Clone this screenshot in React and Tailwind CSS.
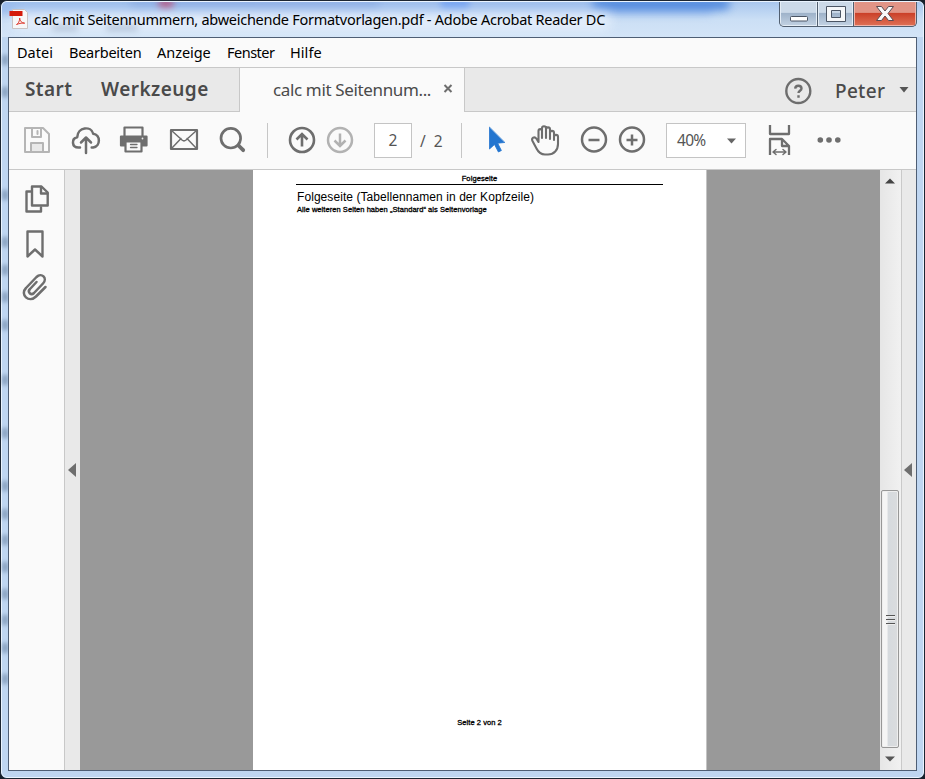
import React from "react";

function Icon({ box, className = "", stroke = "#6e6e6e", w = 2.4, children }) {
  const [, , width, height] = box.split(" ");
  return (
    <svg
      viewBox={box}
      width={width}
      height={height}
      className={"block shrink-0 " + className}
      fill="none"
      stroke={stroke}
      strokeWidth={w}
      strokeLinejoin="round"
      strokeLinecap="round"
    >
      {children}
    </svg>
  );
}

const menus = [
  ["Datei", "w-[52px] tracking-[0px]"],
  ["Bearbeiten", "w-[88px] tracking-[-0.25px]"],
  ["Anzeige", "w-[70px] tracking-[-0.05px]"],
  ["Fenster", "w-[63px] tracking-[-0.5px]"],
  ["Hilfe", "w-[50px] tracking-[0.05px]"],
];

function TitleBar() {
  return (
    <header className="relative flex h-[35px] shrink-0 items-start overflow-hidden rounded-t-[5px] bg-gradient-to-b from-[#a9c7ee] via-[#cbdff5] to-[#d3e4f7]">
      <div className="absolute -left-2 top-0 h-3 w-[720px] rounded-full bg-[#86adea] opacity-60 blur-[5px]" />
      <div className="absolute left-[128px] -top-1 h-3 w-[250px] rounded-full bg-[#7599da] opacity-40 blur-[4px]" />
      <div className="absolute left-[438px] -top-1 h-3 w-[30px] rounded-full bg-[#5b93f5] opacity-60 blur-[3px]" />
      <div className="absolute left-[590px] -top-1 h-3 w-[138px] rounded-full bg-[#3f7edb] opacity-80 blur-[4px]" />
      <div className="absolute left-[156px] -top-[3px] h-2.5 w-4 rounded-full bg-[#b54b77] opacity-80 blur-[3px]" />
      <div className="absolute left-[10px] top-[9px] h-[20px] w-[600px] rounded-full bg-[#eaf2fc] opacity-75 blur-[6px]" />
      <div className="absolute left-[50px] top-[23px] h-[6px] w-[26px] rounded-full bg-[#8193ad] opacity-40 blur-[3px]" />
      <div className="absolute left-[104px] top-[23px] h-[6px] w-[32px] rounded-full bg-[#8193ad] opacity-40 blur-[3px]" />
      <div className="relative ml-[7px] mt-[6px]">
        <svg viewBox="9 8 20 22" width="20" height="22" className="block">
          <path d="M12.500 9.500h12l3 3v16h-15z" fill="#f7f7f7" stroke="#c9c3c3" strokeWidth="1" />
          <path d="M9.500 11h13v5h-13z" fill="#d41b0b" />
          <path d="M16.500 24.500c2-1 3-3 3.200-6.500c0 3 2 5 5 5.200c-2-.4-5 0-8.200 1.300z" fill="none" stroke="#de3c30" strokeWidth="1" />
        </svg>
      </div>
      <h1 className="relative ml-[5px] mt-[7px] whitespace-nowrap text-[14.500px] leading-[20px] tracking-[-0.27px] text-black">
        calc mit Seitennummern, abweichende Formatvorlagen.pdf - Adobe Acrobat Reader DC
      </h1>
      <div className="relative ml-auto mr-[6px] flex h-[25px] w-[138px] shrink-0 overflow-hidden rounded-b-[5px] border border-t-0 border-[#515f70] bg-[#515f70]">
        <button className="flex w-[37px] justify-center border border-t-0 border-[#e4edf6] bg-gradient-to-b from-[#cbd9e8] from-45% via-[#9fb3ca] via-50% to-[#c0d0e1]">
          <svg width="20" height="22" className="block shrink-0">
            <rect x="1.500" y="14.500" width="17" height="4.500" rx="1" fill="#fff" stroke="#4b5564" />
          </svg>
        </button>
        <button className="ml-px flex w-[35px] justify-center border border-t-0 border-[#e4edf6] bg-gradient-to-b from-[#cbd9e8] from-45% via-[#9fb3ca] via-50% to-[#c0d0e1]">
          <svg width="22" height="22" className="block shrink-0">
            <path d="M1.500 4.500h19v15h-19zM6.500 8.500v7h9v-7z" fill="#f5f7f9" fillRule="evenodd" stroke="#4b5564" />
          </svg>
        </button>
        <button className="ml-px flex flex-1 justify-center border border-t-0 border-[#efb3a9] bg-gradient-to-b from-[#e19486] from-45% via-[#cb4029] via-50% to-[#dd6d52]">
          <svg width="22" height="22" className="block shrink-0">
            <path d="M2.500 4.500h5l3.500 4.500l3.500-4.500h5l-5.500 7l5.500 7h-5l-3.500-4.500l-3.500 4.500h-5l5.500-7z" fill="#f8f8f8" stroke="#5a4a50" strokeLinejoin="round" />
          </svg>
        </button>
      </div>
    </header>
  );
}

function Tabs() {
  return (
    <div className="flex h-[44px] shrink-0 text-[#4a4a4a]">
      <div className="flex w-[231px] border-b border-r border-[#c8c8c8] bg-[#e9e9e9] pt-[8px] text-[19px] font-semibold leading-[26px]">
        <span className="ml-[16px] w-[76px] tracking-[0.4px]">Start</span>
        <span className="tracking-[0.45px]">Werkzeuge</span>
      </div>
      <div className="flex w-[224px] bg-[#fafafa] pt-[9px]">
        <span className="ml-[33px] w-[170px] whitespace-nowrap text-[17px] leading-[25px] tracking-[-0.36px]">calc mit Seitennum...</span>
        <Icon box="443 84 11 12" className="mt-[6px]" w={2}>
          <path d="M444.500 86l7 7M451.500 86l-7 7" strokeLinecap="butt" />
        </Icon>
      </div>
      <div className="flex flex-1 border-b border-l border-[#c8c8c8] bg-[#e9e9e9]">
        <Icon box="784 77 28 28" className="ml-[319px] mt-[9px]" w={2.4}>
          <circle cx="798.300" cy="91" r="12" />
          <path d="M795.200 88.600c.2-4 6.300-3.600 6.300-.2c0 2.300-3 2.300-3 4.600" strokeLinecap="butt" />
          <path d="M798.500 95.200v2.500" strokeLinecap="butt" />
        </Icon>
        <span className="ml-[23px] mt-[10px] w-[64px] text-[19px] font-medium leading-[26px] tracking-[0.3px]">Peter</span>
        <svg viewBox="899 87 10 6" width="10" height="6" className="mt-[19px] block">
          <path d="M899.500 87h9l-4.500 5.500z" fill="#555" />
        </svg>
      </div>
    </div>
  );
}

function Toolbar() {
  return (
    <div className="flex h-[58px] shrink-0 items-start border-b border-[#c8c8c8] bg-[#fafafa] text-[15.500px] text-[#555]">
      <Icon box="23 125 28 30" className="ml-[14px] mt-[13px]" stroke="#b5b5b5" w={2}>
        <path d="M25 128h18l6 6v18h-24z" />
        <path d="M32 128v9h9v-9M37.500 131v3" />
        <path d="M31 152v-9h12v9z" fill="#e9e9e9" />
      </Icon>
      <Icon box="71 125 30 30" className="ml-[20px] mt-[13px]" w={2.5}>
        <path d="M80 147.500h-1.500c-7 0-7.300-9-1.300-10.300c.5-10.500 14-11.500 16-3.500c7.500 1 7.600 12.500 0 13.800h-1.500" />
        <path d="M86 153v-14.500M81 142.500l5-5l5 5" />
      </Icon>
      <Icon box="119 125 30 30" className="ml-[18px] mt-[13px]" w={2.2}>
        <path d="M124.500 136v-8.500h18v8.500" fill="#fafafa" />
        <path d="M121 136.500h25.500v9h-25.500z" fill="#6e6e6e" />
        <path d="M125.500 141.500h16v10h-16z" fill="#fafafa" />
        <path d="M130.500 144.500h6.500M130.500 147.500h6.500" strokeWidth="1.300" />
        <circle cx="142.500" cy="138.500" r=".9" fill="#eee" stroke="none" />
      </Icon>
      <Icon box="169 125 30 30" className="ml-[20px] mt-[13px]" w={2.2}>
        <path d="M171 130h26v19h-26z" />
        <path d="M171.500 130.500l10.500 9.500q2 1.700 4 0l10.500-9.500M171.500 148.500l9.500-10M196.500 148.500l-9.500-10" strokeWidth="1.500" />
      </Icon>
      <Icon box="218 125 30 31" className="ml-[19px] mt-[13px]" w={2.700}>
        <circle cx="230.800" cy="138.200" r="9.800" />
        <path d="M238.500 145.500l4.700 4.700" strokeWidth="3.800" />
      </Icon>
      <div className="ml-[19px] mt-[11px] h-[35px] w-px bg-[#c6c6c6]" />
      <Icon box="287 125 30 30" className="ml-[19px] mt-[13px]" w={2.600}>
        <circle cx="302" cy="140" r="12" />
        <path d="M302 146.500v-12M296.500 139.500l5.500-5.500l5.500 5.500" strokeLinejoin="miter" strokeLinecap="butt" />
      </Icon>
      <Icon box="325 125 30 30" className="ml-[8px] mt-[13px]" w={2.500} stroke="#b2b2b2">
        <circle cx="340" cy="140" r="12" />
        <path d="M340 133.500v12M334.500 140.500l5.500 5.500l5.500-5.500" strokeLinejoin="miter" strokeLinecap="butt" />
      </Icon>
      <div className="ml-[19px] mt-[11px] flex h-[35px] w-[38px] items-center justify-center border border-[#c4c4c4] bg-white">2</div>
      <span className="ml-[8px] mt-[17px] w-[42px] whitespace-pre leading-[24px]">/&nbsp; 2</span>
      <div className="-ml-px mt-[11px] h-[35px] w-px bg-[#c6c6c6]" />
      <Icon box="487 125 20 30" className="ml-[25px] mt-[13px]">
        <path d="M489.500 127.500v21.500l5-4.500l3.900 7.500l3-1.500l-3.700-7.300l6.800-.7z" fill="#2375cf" stroke="#2375cf" strokeWidth=".8" />
      </Icon>
      <Icon box="530 124 31 32" className="ml-[23px] mt-[12px]" w={2.100}>
        <path d="M538.500 142v-11c0-2.500 3.500-2.500 3.500 0v7v-9.500c0-3 4-3 4 0v9.500v-8.500c0-2.800 4-2.800 4 0v9.500v-6c0-2.800 4-2.800 4 0v7v-3c0-3 4-2.500 4-.3v7.300c0 6-4 10.500-10 10.500h-3c-5 0-7-3-8.500-6l-4-7.500c-1.500-3 2-5 3.800-2.500z" />
      </Icon>
      <Icon box="579 124 30 30" className="ml-[18px] mt-[12px]" w={2.500}>
        <circle cx="594" cy="139.500" r="12" />
        <path d="M588.500 140h11" strokeLinecap="butt" />
      </Icon>
      <Icon box="617 124 30 30" className="ml-[8px] mt-[12px]" w={2.500}>
        <circle cx="632" cy="139.500" r="12" />
        <path d="M626.500 140h11M632 134.500v11" strokeLinecap="butt" />
      </Icon>
      <div className="ml-[19px] mt-[11px] flex h-[35px] w-[80px] items-center border border-[#c4c4c4] bg-white pl-[10px]">
        <span className="w-[50px] tracking-[-0.7px]">40%</span>
        <svg width="9" height="6" className="block">
          <path d="M0 .5h9l-4.500 5z" fill="#666" />
        </svg>
      </div>
      <Icon box="768 124 24 32" className="ml-[22px] mt-[12px]" w={2.3}>
        <path d="M770 125v9h19v-9M770 155v-16h12l7 7v9M782 139.500v6.500h7" strokeLinecap="butt" strokeLinejoin="round" />
        <path d="M774 152h11M776 149.500l-3 2.500l3 2.500M783 149.500l3 2.500l-3 2.500" strokeWidth="1.500" />
      </Icon>
      <Icon box="815 135 28 10" className="ml-[23px] mt-[23px]">
        <g fill="#6e6e6e" stroke="none">
          <circle cx="820.300" cy="140" r="2.800" />
          <circle cx="829" cy="140" r="2.800" />
          <circle cx="837.800" cy="140" r="2.800" />
        </g>
      </Icon>
    </div>
  );
}

function Document() {
  return (
    <main className="flex min-w-0 flex-1 bg-[#999] pl-[173px]">
      <article className="flex w-[454px] flex-col border-r border-[#c4c4c4] bg-white pl-[43px] font-['Liberation_Sans',Arial,sans-serif] text-black">
        <div className="flex h-[15px] w-[367px] justify-center border-b border-black pt-[4px] text-[7.500px] leading-[9px]">
          <span className="tracking-[0.1px] [-webkit-text-stroke:0.3px_black]">Folgeseite</span>
        </div>
        <h2 className="ml-px mt-[5px] whitespace-nowrap text-[12px] leading-[14px] tracking-[0.07px]">Folgeseite (Tabellennamen in der Kopfzeile)</h2>
        <p className="ml-px mt-px whitespace-nowrap text-[7.500px] leading-[9px] tracking-[0.06px] [-webkit-text-stroke:0.3px_black]">
          Alle weiteren Seiten haben „Standard“ als Seitenvorlage
        </p>
        <footer className="mb-[43px] mt-auto w-[367px] text-center text-[7.500px] leading-[9px] tracking-[0.06px] [-webkit-text-stroke:0.3px_black]">Seite 2 von 2</footer>
      </article>
    </main>
  );
}

function Scrollbar() {
  return (
    <div className="flex w-[22px] flex-col items-center border-r border-[#c9c9c9] bg-gradient-to-r from-[#e6e6e6] to-[#f1f1f1] pr-px">
      <svg width="10" height="6" className="mt-[8px] block">
        <path d="M0 5.500l5-5l5 5z" fill="#444" />
      </svg>
      <div className="mt-auto flex h-[258px] w-[18px] flex-col items-center justify-center gap-[3px] rounded-[2px] border border-[#979797] bg-gradient-to-r from-[#f5f5f5] from-30% via-[#d6dade] via-40% to-[#dadcde] shadow-[inset_0_0_0_1px_#eee]">
        <i className="block h-px w-[9px] bg-[#555] shadow-[0_1px_0_#eee]" />
        <i className="block h-px w-[9px] bg-[#555] shadow-[0_1px_0_#eee]" />
        <i className="block h-px w-[9px] bg-[#555] shadow-[0_1px_0_#eee]" />
      </div>
      <svg width="10" height="6" className="mb-[8px] mt-[8px] block">
        <path d="M0 .5h10l-5 5z" fill="#555" />
      </svg>
    </div>
  );
}

const smudges = [60, 92, 195, 242, 270, 297, 325, 380, 433, 486, 514, 540, 567, 594, 620, 648, 679];

export default function App() {
  return (
    <div className="h-[779px] w-[925px] overflow-hidden bg-[#17202b] font-['Noto_Sans','Open_Sans',sans-serif]">
      <div className="relative flex h-[779px] flex-col overflow-hidden rounded-[7px] border border-[#1c2632] bg-[#bfd6f1]">
        <div className="flex h-[777px] flex-col rounded-[6px] border border-[#eaf4ff]">
          <TitleBar />
          <div className="relative flex flex-1 px-[6px]">
            {smudges.map((y) => (
              <i key={y} className="absolute left-0 h-2.5 w-[6px] bg-[#4f6a8c] opacity-50 blur-[2px]" style={{ top: y - 42 }} />
            ))}
            <div className="relative flex h-[734px] w-full flex-col border border-[#4e5e74] bg-[#fafafa]">
              <nav className="flex h-[30px] shrink-0 border-b border-[#c8c8c8] pl-[8px] pt-[4px] text-[14.500px] leading-[21px] text-black">
                {menus.map(([name, size]) => (
                  <span key={name} className={size}>{name}</span>
                ))}
              </nav>
              <Tabs />
              <Toolbar />
              <div className="flex min-h-0 flex-1">
                <aside className="w-[56px] border-r border-[#c8c8c8] pl-[12px]">
                  <Icon box="21 183 30 32" className="mt-[13px]">
                    <path d="M30.500 191.500h-4v20h14.500v-4" />
                    <path d="M32 186.500h9.500l6.200 6v13h-15.700z" fill="#fafafa" />
                    <path d="M41 187v6.500h6.500" />
                  </Icon>
                  <Icon box="21 229 30 30" className="mt-[14px]" w={2.400}>
                    <path d="M27.500 231.500h15v25l-7.500-7l-7.500 7z" />
                  </Icon>
                  <Icon box="21 272 30 30" className="mt-[13px]" w={2.500}>
                    <path d="M45.500 287l-9.500 9.500c-7 7-16.500-2-10-8.500l10.500-11c5-5 11.500 1 6.500 6.500l-9 9.500c-3 3-7-1-4-4l6.500-7" />
                  </Icon>
                </aside>
                <div className="flex w-[15px] items-center bg-[#e9e9e9] pl-[3px]">
                  <svg width="8" height="14" className="block"><path d="M8 0v14l-8-7z" fill="#6e6e6e" /></svg>
                </div>
                <Document />
                <Scrollbar />
                <div className="flex w-[14px] items-center bg-[#e9e9e9] pl-[2px]">
                  <svg width="8" height="14" className="block"><path d="M8 0v14l-8-7z" fill="#6e6e6e" /></svg>
                </div>
              </div>
            </div>
          </div>
        </div>
      </div>
    </div>
  );
}
